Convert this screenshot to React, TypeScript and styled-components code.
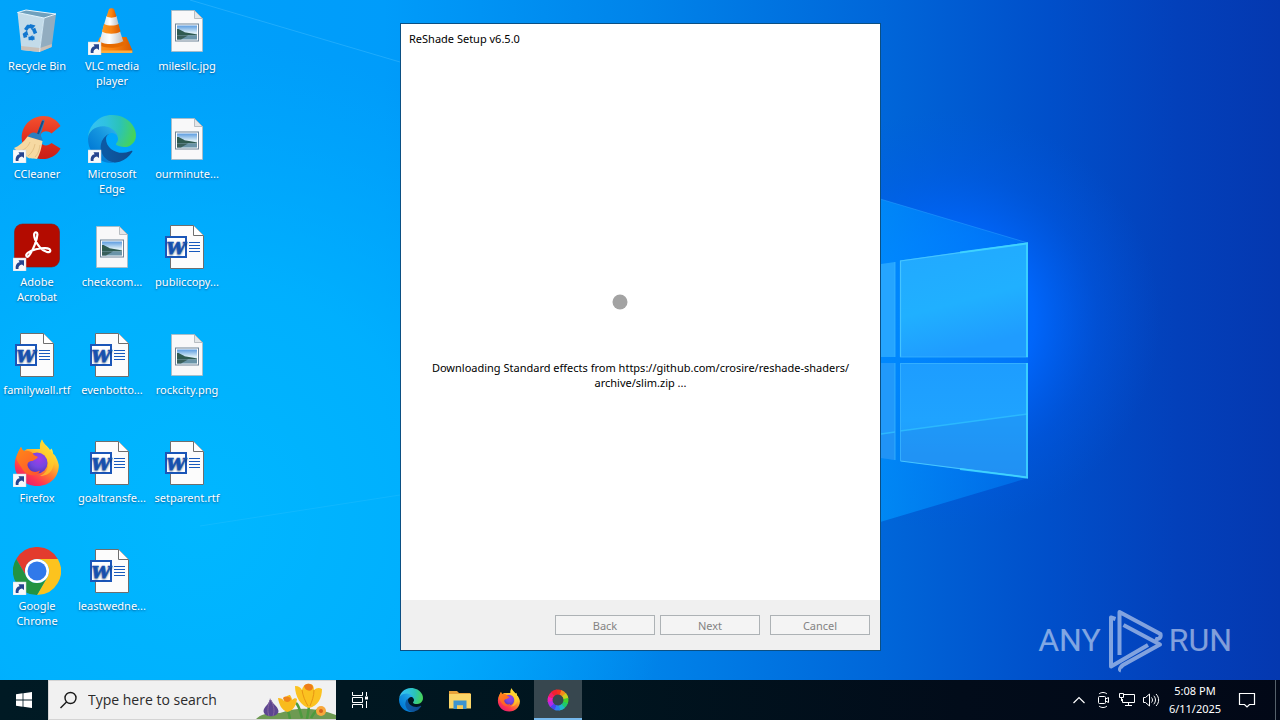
import React from "react";
import styled, { createGlobalStyle } from "styled-components";

const GlobalStyle = createGlobalStyle`
  *, *::before, *::after { box-sizing: border-box; }
  body { margin: 0; font-family: "Noto Sans", "Open Sans", sans-serif; font-size: 11px; line-height: 15px; }
  button, input { font: inherit; color: inherit; }
`;

const Screen = styled.div`
  display: flex;
  flex-direction: column;
  min-height: 100vh;
  background: #0078d4;
`;

const Desktop = styled.main`
  position: relative;
  flex: 1;
  overflow: hidden;
  isolation: isolate;
`;

const WallpaperSvg = styled.svg`
  position: absolute;
  inset: 0;
  width: 100%;
  height: 100%;
  z-index: -1;
`;

const IconGrid = styled.ul`
  display: grid;
  grid-auto-flow: column;
  grid-template-rows: repeat(6, 108px);
  grid-auto-columns: 75px;
  width: max-content;
  margin: 0;
  padding: 0;
  list-style: none;
`;

const Shortcut = styled.button`
  display: flex;
  flex-direction: column;
  align-items: center;
  gap: 3px;
  width: 100%;
  padding: 7px 1px 0 0;
  border: 0;
  background: none;
  color: #fff;
  text-shadow: 0 1px 2px rgba(0, 40, 90, 0.6);
`;

const IconSvg = styled.svg`
  display: block;
  width: 48px;
  height: 48px;
`;

const Dialog = styled.section`
  position: absolute;
  top: 23px;
  left: calc(50% - 240px);
  display: flex;
  flex-direction: column;
  width: 481px;
  height: 628px;
  border: 1px solid #0b4f83;
  background: #fff;
  color: #000;
`;

const DialogTitle = styled.h1`
  margin: 0;
  padding: 0 8px;
  font-size: 11px;
  font-weight: 400;
  line-height: 30px;
`;

const DialogBody = styled.div`
  display: flex;
  flex: 1;
  flex-direction: column;
  align-items: center;
  justify-content: center;
  gap: 36px;
`;

const Spinner = styled.svg`
  width: 60px;
  height: 60px;
`;

const Status = styled.p`
  margin: 0;
  text-align: center;
`;

const DialogFooter = styled.footer`
  display: flex;
  justify-content: flex-end;
  gap: 10px;
  padding: 15px 10px;
  background: #f0f0f0;
`;

const ButtonPair = styled.div`
  display: flex;
  gap: 5px;
`;

const DialogButton = styled.button`
  width: 100px;
  height: 20px;
  padding: 0;
  border: 1px solid #adb2b5;
  background: #f4f4f4;
  color: #838383;
`;

const Watermark = styled.div`
  position: absolute;
  right: 48px;
  bottom: 4px;
  display: flex;
  align-items: center;
  gap: 4px;
  color: #fff;
  opacity: 0.5;
  font-family: "Liberation Sans Narrow", "Roboto", sans-serif;
  font-size: 32px;
  line-height: 72px;
`;

const WatermarkSvg = styled.svg`
  width: 60px;
  height: 72px;
`;

const Taskbar = styled.nav`
  display: flex;
  height: 40px;
  background: linear-gradient(90deg, #001a24 0%, #00151f 45%, #020c1a 75%, #020817 100%);
  color: #fff;
`;

const TaskButton = styled.button<{ $active?: boolean }>`
  display: flex;
  align-items: center;
  justify-content: center;
  width: 48px;
  padding: 0;
  border: 0;
  border-bottom: ${(p) => (p.$active ? "2px solid #76b9ed" : "0")};
  padding-top: ${(p) => (p.$active ? "2px" : "0")};
  background: ${(p) => (p.$active ? "#37474f" : "none")};
`;

const Search = styled.label`
  display: flex;
  align-items: center;
  width: 288px;
  border: 1px solid #d4d4d4;
  border-width: 1px 0 1px 1px;
  background: #f1f1f1;
  color: #222;
  overflow: hidden;
`;

const SearchGlyph = styled.svg`
  flex: none;
  width: 39px;
  height: 38px;
`;

const SearchInput = styled.input`
  flex: 1;
  min-width: 0;
  padding: 0;
  border: 0;
  background: none;
  font-family: "Open Sans", "Noto Sans", sans-serif;
  font-size: 14px;
  line-height: 20px;
  &::placeholder { color: #2b2b2b; opacity: 1; }
`;

const Flowers = styled.svg`
  flex: none;
  width: 80px;
  height: 38px;
`;

const Pinned = styled.div`
  display: flex;
  gap: 1px;
  margin-left: 3px;
`;

const Tray = styled.div`
  display: flex;
  margin-left: auto;
`;

const TrayButton = styled.button`
  display: flex;
  align-items: center;
  justify-content: center;
  width: 24px;
  padding: 0;
  border: 0;
  background: none;
`;

const Clock = styled.button`
  width: 64px;
  padding: 0;
  border: 0;
  background: none;
  line-height: 18px;
  text-align: center;
`;

const ActionButton = styled(TrayButton)`
  width: 40px;
`;

const ShowDesktop = styled.button`
  width: 5px;
  margin-left: 8px;
  padding: 0;
  border: 0;
  border-left: 1px solid #56616b;
  background: none;
`;

const Wallpaper = () => (
  <WallpaperSvg viewBox="0 0 1280 680" preserveAspectRatio="none" aria-hidden="true">
    <defs>
      <linearGradient id="wp-base" x1="0" y1="0" x2="1" y2="0">
        <stop offset="0" stopColor="#00a4fa" />
        <stop offset="0.3" stopColor="#009cfa" />
        <stop offset="0.5" stopColor="#0084ea" />
        <stop offset="0.69" stopColor="#0066d9" />
        <stop offset="0.82" stopColor="#004fca" />
        <stop offset="0.92" stopColor="#0340ba" />
        <stop offset="1" stopColor="#0438b0" />
      </linearGradient>
      <radialGradient id="wp-left" gradientUnits="userSpaceOnUse" cx="200" cy="520" r="480">
        <stop offset="0" stopColor="#00b7ff" />
        <stop offset="0.5" stopColor="#00b4ff" stopOpacity="0.8" />
        <stop offset="1" stopColor="#00b0ff" stopOpacity="0" />
      </radialGradient>
      <radialGradient id="wp-glow" gradientUnits="userSpaceOnUse" cx="950" cy="320" r="210">
        <stop offset="0" stopColor="#0078ff" />
        <stop offset="0.4" stopColor="#0068ff" stopOpacity="0.9" />
        <stop offset="0.7" stopColor="#005cf0" stopOpacity="0.35" />
        <stop offset="1" stopColor="#0058e0" stopOpacity="0" />
      </radialGradient>
      <linearGradient id="wp-beam" x1="0" y1="0" x2="1" y2="0">
        <stop offset="0" stopColor="#0098ff" stopOpacity="0.75" />
        <stop offset="1" stopColor="#0080f8" stopOpacity="0.5" />
      </linearGradient>
      <linearGradient id="wp-pane1" x1="0" y1="0" x2="0.3" y2="1">
        <stop offset="0" stopColor="#22a8ff" />
        <stop offset="0.6" stopColor="#20b0ff" />
        <stop offset="1" stopColor="#1f9cff" />
      </linearGradient>
      <linearGradient id="wp-pane2" x1="0" y1="0" x2="0" y2="1">
        <stop offset="0" stopColor="#1d9dff" />
        <stop offset="0.5" stopColor="#1fa3ff" />
        <stop offset="1" stopColor="#2394f6" />
      </linearGradient>
    </defs>
    <rect width="1280" height="680" fill="url(#wp-base)" />
    <rect width="1280" height="680" fill="url(#wp-left)" />
    <rect width="1280" height="680" fill="url(#wp-glow)" />
    <path d="M190 0 L400 62" stroke="#4cc2ff" strokeWidth="1" opacity="0.4" />
    <path d="M200 526 L400 495" stroke="#4cccff" strokeWidth="1" opacity="0.2" />
    <path d="M860 193 L1028 243 V478 L860 528Z" fill="url(#wp-beam)" />
    <path d="M860 193 L1028 243" stroke="#2aa0ff" opacity="0.5" />
    <path d="M860 267 L895 262 V357 H860Z" fill="#25a5ff" />
    <path d="M860 363 H895 V460 L860 455Z" fill="#2199fb" />
    <path d="M900 260.500 L1028 243 V357 H900Z" fill="url(#wp-pane1)" />
    <path d="M900 363 H1028 V478 L900 461Z" fill="url(#wp-pane2)" />
    <path d="M860 437 L895 432 V460 L860 455Z M900 431 L1028 414 V478 L900 461Z" fill="#1f8cf0" opacity="0.45" />
    <path d="M860 437 L895 432 M900 431 L1028 414" stroke="#2fc0ff" strokeWidth="1.500" opacity="0.8" />
    <path d="M900.500 357 V261 L1028 243 M900.500 461 L1028 477.500" fill="none" stroke="#45c4ff" strokeWidth="1.200" />
    <path d="M900 357 H1028 M900 363.500 H1028 M900.500 363 V461 M895 262 V357 M895 363 V460" stroke="#39b4ff" opacity="0.8" />
    <path d="M960 252.500 L1027 243.500 V357 M1027 363 V477.500 L960 469" fill="none" stroke="#3fd6ff" strokeWidth="2" opacity="0.85" />
  </WallpaperSvg>
);

const Overlay = () => (
  <g>
    <rect x="0" y="35" width="13" height="13" fill="#f7f9fb" stroke="#c9d3dc" strokeWidth="0.5" />
    <path d="M2.800 46 C2.200 42 4 39.500 6.600 39.300 L5.500 37.200 L11 37.200 L11 43 L9 41.400 C6.500 42 5.200 43.200 5.500 46Z" fill="#27458f" />
  </g>
);

const RecycleIcon = () => (
  <IconSvg viewBox="0 0 48 48" aria-hidden="true">
    <path d="M4.500 5.500 L8.500 43 L26.500 45 L31 11Z" fill="#c3dbe9" />
    <path d="M31 11 L43 7 L38.700 40 L26.500 45Z" fill="#92adc0" />
    <path d="M13 3 L43 7 L31 11 L4.500 5.500Z" fill="#6fa0bd" stroke="#e8f5fc" strokeWidth="1" />
    <path d="M8 39 L27 41 L38.800 37 L38.700 40 L26.500 45 L8.500 43Z" fill="#c9c0b8" />
    <path d="M31 11 L26.500 45" stroke="#e3eff6" strokeWidth="0.800" />
    <g fill="none" stroke="#1277cf" strokeWidth="3.600">
      <path d="M12.500 23 L15 19.500 H18" />
      <path d="M20.500 21.500 L22.500 26.500" />
      <path d="M21.500 31 L15.500 31.500 M12.500 30.500 L11.500 26.500" />
    </g>
    <path d="M17 17 L22.500 18.500 L18.500 23Z M9.500 27 L14 23.500 L15.500 28.500Z M19.500 28 V34 L16 31Z" fill="#1277cf" />
  </IconSvg>
);

const VlcIcon = () => (
  <IconSvg viewBox="0 0 48 48" aria-hidden="true">
    <defs>
      <linearGradient id="vlc-o" x1="0" x2="1">
        <stop offset="0" stopColor="#ff9a22" />
        <stop offset="0.5" stopColor="#f98210" />
        <stop offset="1" stopColor="#d85a00" />
      </linearGradient>
      <linearGradient id="vlc-w" x1="0" x2="1">
        <stop offset="0" stopColor="#e3e6e8" />
        <stop offset="0.4" stopColor="#ffffff" />
        <stop offset="1" stopColor="#b9bdc2" />
      </linearGradient>
    </defs>
    <path d="M12 30 H38.500 L44.300 43 V45.500 H6 V43Z" fill="url(#vlc-o)" />
    <path d="M6 43.500 H44.300 V46 H6Z" fill="#ffae3d" />
    <path d="M12 33 L16 18 H30 L35.500 35 C31 40 17 40 12 35Z" fill="url(#vlc-w)" />
    <path d="M11 34.500 C17 38 30 38 35.500 34 L36.500 37 C32 42 16 42 10.500 37.500Z" fill="#e66a00" />
    <path d="M16 17 H30.500 L32.500 24.500 C28 27.500 18.500 27.500 14 24.500Z" fill="url(#vlc-o)" />
    <path d="M18.500 9 H28.500 L30.500 17 C27 19 20 19 16.200 17Z" fill="url(#vlc-w)" />
    <path d="M21 2 C22 1 25 1 26 2 L28.500 9.500 C26 11 21 11 18.500 9.500Z" fill="url(#vlc-o)" />
    <Overlay />
  </IconSvg>
);

const CCleanerIcon = () => (
  <IconSvg viewBox="0 0 48 48" aria-hidden="true">
    <defs>
      <linearGradient id="cc-r" x1="0" y1="0" x2="0" y2="1">
        <stop offset="0" stopColor="#f4512f" />
        <stop offset="0.5" stopColor="#e0301f" />
        <stop offset="1" stopColor="#c81e18" />
      </linearGradient>
    </defs>
    <path d="M47.500 11 C41 0 28 -1.500 18.500 4.500 C8 11 6 25 12 34 C19 47 40 48 47.500 33.500 L38.500 28 C35 31.500 30 31 28 28 C25.500 24 27 18.500 30 17 C33 15.500 36 16.500 38.500 18.500Z" fill="url(#cc-r)" />
    <path d="M29 6 C29.500 4 32 4.500 31.500 6.500 L27.500 20 L30 26 L14.500 22 C17 18 20 16.500 24 18.500Z" fill="#2a7fc0" />
    <path d="M30 6 L25 19" stroke="#174d82" strokeWidth="2" />
    <path d="M14.500 21.500 L29.500 26 C28.500 33 27 39 24 44 C20 43 15 45 12 40 C7 39 4 36 1 33 C6 31 11 27 14.500 21.500Z" fill="#f6d9a2" />
    <path d="M17 27 C15 32 12 34 8 36 M22 29 C21 34 19 38 15 41 M27 30 C26 36 25 39 22 42" stroke="#dcb67a" fill="none" strokeWidth="0.700" />
    <Overlay />
  </IconSvg>
);

const EdgeArt = ({ id }: { id: string }) => (
  <>
    <defs>
      <linearGradient id={`${id}-a`} x1="0.2" y1="0.5" x2="1" y2="0.5">
        <stop offset="0" stopColor="#0c59a4" />
        <stop offset="1" stopColor="#114a8b" />
      </linearGradient>
      <linearGradient id={`${id}-b`} x1="0.9" y1="0.2" x2="0.3" y2="0.9">
        <stop offset="0" stopColor="#2aaee8" />
        <stop offset="0.4" stopColor="#1595df" />
        <stop offset="1" stopColor="#0078d4" />
      </linearGradient>
      <radialGradient id={`${id}-c`} gradientUnits="userSpaceOnUse" cx="26" cy="46" r="240">
        <stop offset="0" stopColor="#35c1f1" />
        <stop offset="0.3" stopColor="#2fc2df" />
        <stop offset="0.6" stopColor="#2bc3b8" />
        <stop offset="0.95" stopColor="#45d35c" />
      </radialGradient>
    </defs>
    <path fill={`url(#${id}-a)`} d="M231 190.500c-3.400 1.800-6.900 3.400-10.500 4.700a101.700 101.700 0 0 1-35.900 6.500c-47.300 0-88.500-32.500-88.500-74.300.1-11.400 6.400-21.900 16.400-27.300-42.800 1.800-53.800 46.400-53.800 72.500 0 73.900 68.100 81.400 82.800 81.400 7.900 0 19.800-2.300 27-4.600l1.300-.4a128.300 128.300 0 0 0 66.600-52.800c1.200-1.900.6-4.300-1.200-5.500-1.300-.8-2.900-.9-4.200-.2z" />
    <path fill={`url(#${id}-b)`} d="M105.700 241.400a79.200 79.200 0 0 1-22.700-21.300 80.700 80.700 0 0 1 29.500-120c3.200-1.500 8.500-4.100 15.600-4 10.100.1 19.600 4.900 25.700 13 4 5.400 6.300 11.900 6.400 18.700 0-.2 24.500-79.600-80-79.600-43.900 0-80 41.700-80 78.200-.2 19.300 4 38.500 12.100 56 27.600 58.800 94.800 87.600 156.400 67.100-21.100 6.600-44.100 3.700-62.900-8.100z" />
    <path fill={`url(#${id}-c)`} d="M152.300 148.900c-.9 1-3.400 2.500-3.400 5.600 0 2.600 1.700 5.200 4.800 7.300 14.300 10 41.400 8.600 41.500 8.600 10.700 0 21.100-2.900 30.300-8.300 18.800-11 30.400-31.100 30.400-52.900.3-22.400-8-37.300-11.300-43.900C223.500 23.900 177.700 0 128 0 58.100-.1 1 56 0 125.900c.5-36.600 36.800-66 80-66 3.500 0 23.500.3 42 10.100 16.300 8.600 24.900 18.900 30.800 29.200 6.200 10.700 7.300 24.100 7.300 29.500 0 5.300-2.700 13.300-7.800 20.200z" />
  </>
);

const EdgeIcon = () => (
  <IconSvg viewBox="0 0 48 48" aria-hidden="true">
    <g transform="scale(0.1875)"><EdgeArt id="edge-desk" /></g>
    <Overlay />
  </IconSvg>
);

const AcrobatIcon = () => (
  <IconSvg viewBox="0 0 48 48" aria-hidden="true">
    <rect x="1.500" y="1" width="45" height="43" rx="8" fill="#b30b00" stroke="#8c1a12" strokeWidth="0.600" />
    <path
      d="M13.800 33.600 C11.500 31 16.500 28 23 26.300 C29 24.800 37 24.500 37.300 27.500 C37.500 30.500 31.500 29.500 27 24.500 C22.500 19.500 20.500 13 21.300 10.500 C22 8.500 24.500 9 24.400 11.500 C24.200 17 20 26.500 17.500 30.500 C16 33 14.800 34.300 13.800 33.600Z"
      fill="none" stroke="#fff" strokeWidth="2.200" strokeLinejoin="round"
    />
    <Overlay />
  </IconSvg>
);

const FirefoxArt = ({ id }: { id: string }) => (
  <>
    <defs>
      <linearGradient id={`${id}-f`} x1="0.8" y1="0.1" x2="0.25" y2="0.95">
        <stop offset="0" stopColor="#fff14a" />
        <stop offset="0.3" stopColor="#ffc02d" />
        <stop offset="0.55" stopColor="#ff7a2f" />
        <stop offset="0.8" stopColor="#ff3750" />
        <stop offset="1" stopColor="#e81f6c" />
      </linearGradient>
      <linearGradient id={`${id}-h`} x1="0" y1="0" x2="0.6" y2="1">
        <stop offset="0" stopColor="#ff8a16" />
        <stop offset="1" stopColor="#ff5a2a" />
      </linearGradient>
      <radialGradient id={`${id}-p`} cx="0.6" cy="0.3" r="0.8">
        <stop offset="0" stopColor="#a13be8" />
        <stop offset="0.5" stopColor="#7547e0" />
        <stop offset="1" stopColor="#4f33b0" />
      </radialGradient>
    </defs>
    <path d="M29 0.500 C30.500 5 34.500 7 37 11 L38.500 9.500 C39.500 11 40 13 40.200 15 C42.500 16 45 22 45.800 26 C46 38 37 47 24.500 47 C11 47 1 37 1.800 24 C2 19 4.500 14 8 8 C9 10 9 11 9.500 13 L14 10 L27 10 C26.500 6 27.500 3 29 0.500Z" fill={`url(#${id}-f)`} />
    <circle cx="24" cy="24" r="10.500" fill={`url(#${id}-p)`} />
    <path d="M8 8 C9 10.500 10 11.500 12 12 C15 11.500 18 12.500 20 14.500 C20 16.500 24 17 25 18 C24 20 21.500 20.500 19.500 22 C15 22 14.500 24.500 14.500 26.500 C16 32.500 22 34.500 27 31.500 C25 37.500 15 38.500 10 31 C8 27 3 22 3.500 18 C5 14 6 11 8 8Z" fill={`url(#${id}-h)`} />
    <path d="M27 10 C30 12 34 18 35 23 C36 30 32 35 27 37 C38 37 43 28 40.200 15 C37 11 32 8 29 0.500 C27.500 3 26.500 7 27 10Z" fill="#ffd02b" opacity="0.65" />
  </>
);

const FirefoxIcon = () => (
  <IconSvg viewBox="0 0 48 48" aria-hidden="true">
    <FirefoxArt id="ff-desk" />
    <Overlay />
  </IconSvg>
);

const ChromeIcon = () => (
  <IconSvg viewBox="0 0 48 48" aria-hidden="true">
    <path d="M3.200 12 A24 24 0 0 1 44.800 12 L24 12 A12 12 0 0 0 13.600 30Z" fill="#e33b2e" />
    <path d="M44.800 12 A24 24 0 0 1 24 48 L34.400 30 A12 12 0 0 0 24 12Z" fill="#fcc31e" />
    <path d="M24 48 A24 24 0 0 1 3.200 12 L13.600 30 A12 12 0 0 0 34.400 30Z" fill="#229342" />
    <circle cx="24" cy="24" r="12" fill="#fff" />
    <circle cx="24" cy="24" r="9.500" fill="#3079ea" />
    <Overlay />
  </IconSvg>
);

const ImageFileIcon = () => (
  <IconSvg viewBox="0 0 48 48" aria-hidden="true">
    <defs>
      <linearGradient id="photo-sky" x1="0" y1="0" x2="0" y2="1">
        <stop offset="0" stopColor="#5b9be0" />
        <stop offset="0.5" stopColor="#d7ebf5" />
      </linearGradient>
    </defs>
    <path d="M8.500 3.500 H31.500 L39.500 11.500 V44.500 H8.500Z" fill="#f8f8f9" stroke="#b3b9be" strokeWidth="0.800" />
    <path d="M31.500 3.500 V11.500 H39.500Z" fill="#e3e6e8" stroke="#a9b0b6" strokeWidth="0.800" />
    <rect x="12.500" y="17" width="23" height="17" fill="#fff" stroke="#6f8397" />
    <rect x="14" y="18.500" width="20" height="14" fill="url(#photo-sky)" />
    <path d="M14 22 C17 21.500 19 24.500 23 25.500 C27 26 31 27 34 27.500 V28.500 H14Z" fill="#2f5a50" />
    <path d="M14 28.500 H34 V32.500 H14Z" fill="#6a94a8" />
    <path d="M14 28.500 H25 L18 32.500 H14Z" fill="#395f5a" />
  </IconSvg>
);

const WordFileIcon = () => (
  <IconSvg viewBox="0 0 48 48" aria-hidden="true">
    <path d="M7.500 2.500 H30.500 L40.500 12.500 V45.500 H7.500Z" fill="#fcfcfc" stroke="#6e6e6e" />
    <path d="M30.500 2.500 V12.500 H40.500" fill="#fff" stroke="#6e6e6e" />
    <path d="M26 19.500 H37 M26 22.500 H37 M26 25.500 H37 M26 28.500 H37" stroke="#185abd" strokeWidth="1" />
    <rect x="3" y="14" width="20" height="20" fill="#fff" stroke="#1b56b8" strokeWidth="2" />
    <text x="13" y="30.500" textAnchor="middle" fontFamily="DejaVu Serif, serif" fontSize="17" fontWeight="700" fontStyle="italic" fill="#1b56b8" stroke="#1b56b8" strokeWidth="0.600">W</text>
  </IconSvg>
);

const shortcuts: { label: string; Icon: React.FC }[] = [
  { label: "Recycle Bin", Icon: RecycleIcon },
  { label: "CCleaner", Icon: CCleanerIcon },
  { label: "Adobe\nAcrobat", Icon: AcrobatIcon },
  { label: "familywall.rtf", Icon: WordFileIcon },
  { label: "Firefox", Icon: FirefoxIcon },
  { label: "Google\nChrome", Icon: ChromeIcon },
  { label: "VLC media\nplayer", Icon: VlcIcon },
  { label: "Microsoft\nEdge", Icon: EdgeIcon },
  { label: "checkcom...", Icon: ImageFileIcon },
  { label: "evenbotto...", Icon: WordFileIcon },
  { label: "goaltransfe...", Icon: WordFileIcon },
  { label: "leastwedne...", Icon: WordFileIcon },
  { label: "milesllc.jpg", Icon: ImageFileIcon },
  { label: "ourminute...", Icon: ImageFileIcon },
  { label: "publiccopy...", Icon: WordFileIcon },
  { label: "rockcity.png", Icon: ImageFileIcon },
  { label: "setparent.rtf", Icon: WordFileIcon },
];

const ShortcutLabel = styled.span`
  white-space: pre;
  text-align: center;
`;

const SpringFlowers = () => (
  <Flowers viewBox="0 0 80 38" aria-hidden="true">
    <path d="M0 38 C6 32 16 31 24 32 C40 26 60 26 80 34 V38Z" fill="#6e9a52" />
    <path d="M14 17 C15 22 22 25 22.500 30 C22 37 8 37 7.500 30 C8 25 14 23 14 17Z" fill="#5d4590" />
    <path d="M14 19 C12 25 11 30 13 35 M15 19 C18 25 19 30 17 35" stroke="#86659f" fill="none" />
    <path d="M34 38 C33 32 32 30 31 26 M51 38 C52 32 53 28 53 23 M46 37 C44 31 44 26 40 22 M55 37 C58 31 62 28 66 27" stroke="#4c9a3e" strokeWidth="2.500" fill="none" />
    <path d="M22 17 C25 17 27 18 28 20 C29 16 32 14 34 14 C35 16 36 17 36 19 C38 17 40 17 41 18 C40 25 37 30 31 31 C26 29 23 24 22 17Z" fill="#f9bb1c" />
    <path d="M27 17 C29 15 33 15 35 18 C34 22 28 22 27 17Z" fill="#f08418" />
    <path d="M39 5 C43 5 45 7 46 9 C47 4 51 2 54 3 C57 3 58 6 58 9 C60 7 63 6 66 8 C66 17 62 25 53 27 C45 25 39 16 39 5Z" fill="#fbc220" />
    <path d="M46 9 C47 15 49 20 52 25 M58 9 C58 15 56 20 54 25" stroke="#e89412" fill="none" />
    <path d="M48 5 C50 2 56 2 57 6 C57 11 49 11 48 5Z" fill="#ee7d1a" />
    <circle cx="65" cy="30" r="5" fill="#f8a83c" />
    <circle cx="65" cy="30" r="2" fill="#d5621b" />
  </Flowers>
);

const App: React.FC = () => (
  <Screen>
    <GlobalStyle />
    <Desktop>
      <Wallpaper />
      <IconGrid>
        {shortcuts.map(({ label, Icon }) => (
          <li key={label}>
            <Shortcut type="button">
              <Icon />
              <ShortcutLabel>{label}</ShortcutLabel>
            </Shortcut>
          </li>
        ))}
      </IconGrid>
      <Watermark>
        <span>ANY</span>
        <WatermarkSvg viewBox="3 0 60 72" aria-hidden="true">
          <g fill="none" stroke="#fff" strokeWidth="4" strokeLinejoin="round">
            <path d="M13.500 15 L9 13.500 V62.500 L46 41" />
            <path d="M17.500 51 V8 L58.500 30 C59.500 34 56 36 53 34.500" />
            <path d="M21.500 21 L58 40.500 L21 61 C18 63 17 66 19 66.500" />
          </g>
        </WatermarkSvg>
        <span>RUN</span>
      </Watermark>
      <Dialog role="dialog" aria-labelledby="setup-title">
        <DialogTitle id="setup-title">ReShade Setup v6.5.0</DialogTitle>
        <DialogBody>
          <Spinner viewBox="0 0 60 60" role="progressbar" aria-label="Downloading">
            <circle cx="9" cy="38" r="7.500" fill="#a3a3a3" />
          </Spinner>
          <Status>
            Downloading Standard effects from https://github.com/crosire/reshade-shaders/
            <br />
            archive/slim.zip ...
          </Status>
        </DialogBody>
        <DialogFooter>
          <ButtonPair>
            <DialogButton type="button" disabled>Back</DialogButton>
            <DialogButton type="button" disabled>Next</DialogButton>
          </ButtonPair>
          <DialogButton type="button" disabled>Cancel</DialogButton>
        </DialogFooter>
      </Dialog>
    </Desktop>
    <Taskbar>
      <TaskButton type="button" aria-label="Start">
        <svg width="16" height="16" viewBox="0 0 16 16" fill="#fff">
          <path d="M0 2.200 L6.600 1.300 V7.600 H0Z M7.400 1.200 L16 0 V7.600 H7.400Z M0 8.400 H6.600 V14.700 L0 13.800Z M7.400 8.400 H16 V16 L7.400 14.800Z" />
        </svg>
      </TaskButton>
      <Search>
        <SearchGlyph viewBox="0 0 39 38" aria-hidden="true">
          <g fill="none" stroke="#1a1a1a" strokeWidth="1.400">
            <circle cx="21.500" cy="17" r="5.500" />
            <path d="M17.500 21 L11.500 27" />
          </g>
        </SearchGlyph>
        <SearchInput type="text" placeholder="Type here to search" aria-label="Search" />
        <SpringFlowers />
      </Search>
      <TaskButton type="button" aria-label="Task View">
        <svg width="18" height="18" viewBox="0 0 18 18" fill="none" stroke="#fff">
          <path d="M1.500 1 V4.500 H11.500 V1 M1.500 17 V13.500 H11.500 V17 M1.500 6.500 H11.500 V11.500 H1.500Z M15.500 1 V5 M15.500 10 V17" />
          <rect x="14.500" y="6" width="2" height="2" fill="#fff" />
        </svg>
      </TaskButton>
      <Pinned>
        <TaskButton type="button" aria-label="Microsoft Edge">
          <svg width="24" height="24" viewBox="0 0 256 256"><EdgeArt id="edge-task" /></svg>
        </TaskButton>
        <TaskButton type="button" aria-label="File Explorer">
          <svg width="24" height="24" viewBox="0 0 24 24">
            <path d="M1 3 H9 L11 5 H22.500 V20 H1Z" fill="#e8a33a" />
            <path d="M1 6 H23 V20.500 H1Z" fill="#fbd668" />
            <path d="M5.500 12.500 H18.500 V21 H15 V17.500 H9 V21 H5.500Z" fill="#3d94d0" />
            <path d="M9 17.500 H15 V21 H9Z" fill="#f6c957" />
          </svg>
        </TaskButton>
        <TaskButton type="button" aria-label="Firefox">
          <svg width="24" height="24" viewBox="0 0 48 48"><FirefoxArt id="ff-task" /></svg>
        </TaskButton>
        <TaskButton type="button" aria-label="ReShade Setup" $active>
          <svg width="24" height="24" viewBox="-12 -12 24 24" fill="none" strokeWidth="5">
            {["#f4301f", "#f58a1c", "#c9d01f", "#3fd22c", "#1fc96a", "#1fb6c8", "#2d82f0", "#4a45ee", "#b22be8", "#f01fb8", "#f01f66", "#f22030"].map((c, i) => (
              <path key={c} d="M-0.200 -8 A8 8 0 0 1 4.300 -6.700" stroke={c} transform={`rotate(${i * 30 - 10})`} />
            ))}
          </svg>
        </TaskButton>
      </Pinned>
      <Tray>
        <TrayButton type="button" aria-label="Show hidden icons">
          <svg width="12" height="8" viewBox="0 0 12 8" fill="none" stroke="#fff" strokeWidth="1.200"><path d="M0.500 7 L6 1.500 L11.500 7" /></svg>
        </TrayButton>
        <TrayButton type="button" aria-label="Meet Now">
          <svg width="16" height="18" viewBox="0 0 16 18" fill="none" stroke="#fff">
            <rect x="3.500" y="5.500" width="7" height="7" rx="1" />
            <path d="M10.500 8 L13.500 6.500 V11.500 L10.500 10 M4 3 C6 1 10 1 12 3 M4 15 C6 17 10 17 12 15" />
          </svg>
        </TrayButton>
        <TrayButton type="button" aria-label="Network">
          <svg width="18" height="16" viewBox="0 0 18 16" fill="none" stroke="#fff">
            <path d="M5 2.500 H16.500 V10.500 H4.500 V7 M10.500 10.500 V13.500 M7 13.500 H14 M1.500 1.500 H5.500 V5.500 H1.500Z M3.500 5.500 V9" />
          </svg>
        </TrayButton>
        <TrayButton type="button" aria-label="Volume">
          <svg width="18" height="16" viewBox="0 0 18 16" fill="none" stroke="#fff">
            <path d="M1.500 5.500 H3.500 L7.500 2 V14 L3.500 10.500 H1.500Z M9.500 5.500 C10.800 7 10.800 9 9.500 10.500 M11.800 3.800 C14 6.500 14 9.500 11.800 12.200 M14 2 C17.500 5.500 17.500 10.500 14 14" />
          </svg>
        </TrayButton>
        <Clock type="button">
          5:08 PM
          <br />
          6/11/2025
        </Clock>
        <ActionButton type="button" aria-label="Notifications">
          <svg width="18" height="18" viewBox="0 0 18 18" fill="none" stroke="#fff" strokeWidth="1.200">
            <path d="M1.500 2.500 H16.500 V13.500 H11.500 L9 16 L6.500 13.500 H1.500Z" />
          </svg>
        </ActionButton>
        <ShowDesktop type="button" aria-label="Show desktop" />
      </Tray>
    </Taskbar>
  </Screen>
);

export default App;
